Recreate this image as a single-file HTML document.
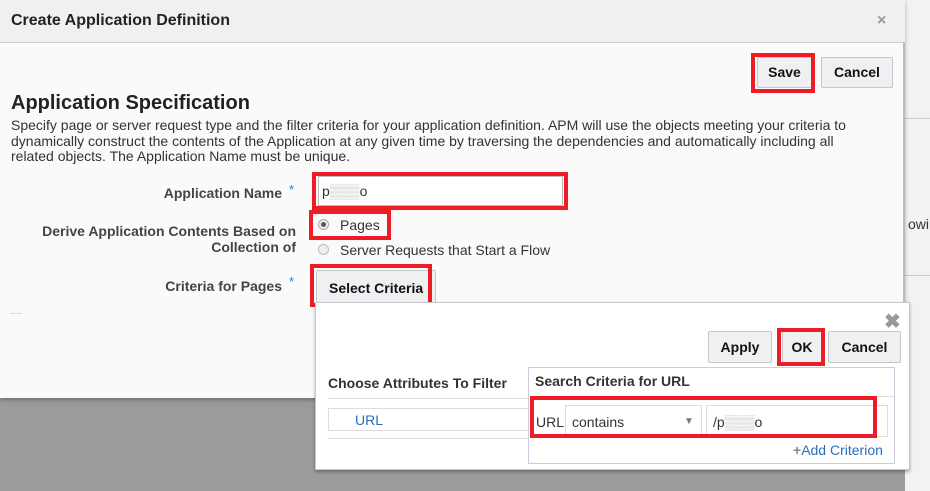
<!DOCTYPE html>
<html><head><style>
*{margin:0;padding:0;box-sizing:border-box}
body{width:930px;height:491px;position:relative;overflow:hidden;background:#9b9b9b;font-family:"Liberation Sans",sans-serif;font-size:13px;color:#333}
.a{position:absolute}
.btn{position:absolute;background:#eef0f2;border:1px solid #c4c8cc;border-radius:2px;font-weight:bold;font-size:14px;color:#111;text-align:center}
.red{position:absolute;border:4px solid #ee1c25}
.lbl{position:absolute;text-align:right;font-weight:bold;color:#444;font-size:14px}
</style></head><body>
<div class="a" style="left:905px;top:0;width:25px;height:491px;background:#f2f2f2"></div>
<div class="a" style="left:905px;top:118px;width:25px;height:1px;background:#ccc"></div>
<div class="a" style="left:905px;top:275px;width:25px;height:1px;background:#ccc"></div>
<div class="a" style="left:908px;top:216px;font-size:14px;color:#333">owin</div>
<div class="a" style="left:0;top:0;width:905px;height:398px;background:#fafafa;border-right:2px solid #bbb;box-shadow:0 2px 4px rgba(0,0,0,.3)"></div>
<div class="a" style="left:0;top:0;width:905px;height:43px;background:#f0f0f0;border-bottom:1px solid #c9ced3"></div>
<div class="a" style="left:11px;top:12px;font-size:16px;font-weight:bold;color:#222">Create Application Definition</div>
<div class="a" style="left:877px;top:12px;font-size:16px;color:#999;font-weight:bold">×</div>
<div class="btn" style="left:757px;top:57px;width:55px;height:31px;line-height:29px">Save</div>
<div class="red" style="left:751px;top:53px;width:64px;height:40px"></div>
<div class="btn" style="left:821px;top:57px;width:72px;height:31px;line-height:29px">Cancel</div>
<div class="a" style="left:11px;top:92px;font-size:20px;font-weight:bold;color:#222">Application Specification</div>
<div class="a" style="left:11px;top:118px;width:850px;font-size:14px;line-height:15.7px;color:#333">Specify page or server request type and the filter criteria for your application definition. APM will use the objects meeting your criteria to dynamically construct the contents of the Application at any given time by traversing the dependencies and automatically including all related objects. The Application Name must be unique.</div>
<div class="lbl" style="left:0;top:185px;width:282px">Application Name</div>
<div class="a" style="left:289px;top:182px;color:#3a7bc8">*</div>
<div class="a" style="left:318px;top:176px;width:245px;height:30px;background:#fff;border:1px solid #bbb"></div>
<div class="red" style="left:312px;top:172px;width:256px;height:38px"></div>
<div class="a" style="left:322px;top:183px;font-size:14px">p<span style="color:#bbb">▒▒▒</span>o</div>
<div class="lbl" style="left:0;top:223px;width:296px;line-height:16px">Derive Application Contents Based on<br>Collection of</div>
<div class="a" style="left:318px;top:219px;width:11px;height:11px;border-radius:50%;background:#eee;border:1px solid #aaa"><div class="a" style="left:2px;top:2px;width:5px;height:5px;border-radius:50%;background:#555"></div></div>
<div class="a" style="left:340px;top:217px;font-size:14px">Pages</div>
<div class="red" style="left:309px;top:210px;width:82px;height:30px"></div>
<div class="a" style="left:318px;top:244px;width:11px;height:11px;border-radius:50%;background:#eee;border:1px solid #bbb"></div>
<div class="a" style="left:340px;top:242px;font-size:14px">Server Requests that Start a Flow</div>
<div class="lbl" style="left:0;top:278px;width:282px">Criteria for Pages</div>
<div class="a" style="left:289px;top:274px;color:#3a7bc8">*</div>
<div class="btn" style="left:316px;top:270px;width:120px;height:36px;line-height:34px;text-align:left;padding-left:12px">Select Criteria</div>
<div class="red" style="left:310px;top:264px;width:122px;height:43px"></div>
<div class="a" style="left:10px;top:313px;width:12px;height:1px;background:#ddd"></div>
<div class="a" style="left:315px;top:302px;width:595px;height:168px;background:#fff;border:1px solid #c4c8cc;box-shadow:0 2px 3px rgba(0,0,0,.3)"></div>
<div class="a" style="left:884px;top:312px;font-size:20px;font-weight:bold;color:#999;line-height:20px">✖</div>
<div class="btn" style="left:708px;top:331px;width:64px;height:32px;line-height:30px">Apply</div>
<div class="btn" style="left:782px;top:331px;width:40px;height:32px;line-height:30px">OK</div>
<div class="red" style="left:777px;top:328px;width:48px;height:38px"></div>
<div class="btn" style="left:828px;top:331px;width:73px;height:32px;line-height:30px">Cancel</div>
<div class="a" style="left:328px;top:375px;font-weight:bold;color:#333;font-size:14px">Choose Attributes To Filter</div>
<div class="a" style="left:328px;top:398px;width:200px;height:1px;background:#ddd"></div>
<div class="a" style="left:328px;top:408px;width:210px;height:23px;border:1px solid #ddd;background:#fff"></div>
<div class="a" style="left:355px;top:412px;color:#2a6ebb;font-size:14px">URL</div>
<div class="a" style="left:328px;top:438px;width:200px;height:1px;background:#ddd"></div>
<div class="a" style="left:528px;top:367px;width:367px;height:97px;border:1px solid #ccd;background:#fff"></div>
<div class="a" style="left:535px;top:373px;font-weight:bold;color:#333;font-size:14px">Search Criteria for URL</div>
<div class="a" style="left:530px;top:396px;width:364px;height:1px;background:#ddd"></div>
<div class="a" style="left:536px;top:414px;font-size:14px">URL</div>
<div class="a" style="left:565px;top:405px;width:137px;height:32px;border:1px solid #ddd;background:#fff"></div>
<div class="a" style="left:572px;top:414px;font-size:14px">contains</div>
<div class="a" style="left:684px;top:416px;font-size:10px;color:#777">▼</div>
<div class="a" style="left:706px;top:405px;width:182px;height:32px;border:1px solid #ddd;background:#fff"></div>
<div class="a" style="left:713px;top:414px;font-size:14px">/p<span style="color:#bbb">▒▒▒</span>o</div>
<div class="red" style="left:530px;top:396px;width:347px;height:42px"></div>
<div class="a" style="left:793px;top:442px;font-size:14px;color:#2a6ebb"><b style="color:#888">+</b>Add Criterion</div>
</body></html>
